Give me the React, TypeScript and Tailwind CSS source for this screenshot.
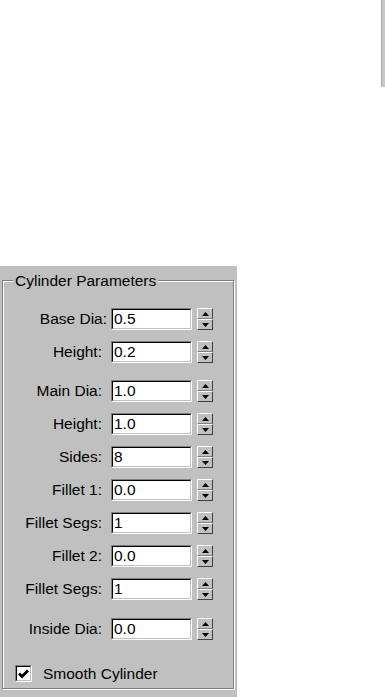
import React from "react";

type Row = { label: string; value: string; lpad?: string };

const group1: Row[] = [
  { label: "Base Dia:", value: "0.5", lpad: "w-[104px]" },
  { label: "Height:", value: "0.2" },
];
const group2: Row[] = [
  { label: "Main Dia:", value: "1.0" },
  { label: "Height:", value: "1.0" },
  { label: "Sides:", value: "8" },
  { label: "Fillet 1:", value: "0.0" },
  { label: "Fillet Segs:", value: "1" },
  { label: "Fillet 2:", value: "0.0" },
  { label: "Fillet Segs:", value: "1" },
];

function Spinner() {
  return (
    <div className="ml-[5px] flex h-[22px] w-[16px] flex-col">
      <div className="flex h-[11px] items-center justify-center border-t border-l border-b border-r border-t-white border-l-white border-b-[#808080] border-r-[#404040] bg-[#c0c0c0]">
        <svg width="7" height="4" viewBox="0 0 7 4">
          <polygon points="3.5,0 7,4 0,4" fill="#000" />
        </svg>
      </div>
      <div className="flex h-[11px] items-center justify-center border-t border-l border-b border-r border-t-white border-l-white border-b-[#404040] border-r-[#404040] bg-[#c0c0c0]">
        <svg width="7" height="4" viewBox="0 0 7 4">
          <polygon points="0,0 7,0 3.5,4" fill="#000" />
        </svg>
      </div>
    </div>
  );
}

function Field({ row }: { row: Row }) {
  return (
    <div className="flex h-[22px] items-center">
      <div className={`${row.lpad ?? "w-[99px]"} text-right leading-none`}>{row.label}</div>
      <div className={`${row.lpad ? "ml-[4px]" : "ml-[9px]"} h-[22px] w-[81px] border-t border-l border-b border-r border-t-[#808080] border-l-[#808080] border-b-white border-r-white`}>
        <div className="flex h-full w-full items-center border-t border-l border-b border-r border-t-[#000] border-l-[#000] border-b-[#c0c0c0] border-r-[#c0c0c0] bg-white pl-[1px] leading-none">
          {row.value}
        </div>
      </div>
      <Spinner />
    </div>
  );
}

export default function App() {
  return (
    <div className="h-[697px] w-[385px] overflow-hidden bg-white font-['Liberation_Sans',Arial,sans-serif] text-[15.5px] text-black">
      <div className="flex justify-end">
        <div className="h-[87px] w-[4px] border-l border-[#a8a8a8] bg-[#c8c8c8]" />
      </div>
      <div className="mt-[179px] h-[431px] w-[237px] bg-[#c0c0c0] px-[2px] pt-[14px]">
        <div className="relative h-[409px] w-[232px] border border-[#808080] shadow-[inset_1px_1px_0_#fff,1px_1px_0_#fff] pt-[27px]">
          <div className="absolute left-[10px] top-[-10px] bg-[#c0c0c0] px-[2px] leading-[19px]">
            Cylinder Parameters
          </div>
          <div className="flex flex-col gap-[11px]">
            {group1.map((r, i) => (
              <Field key={"a" + i} row={r} />
            ))}
          </div>
          <div className="mt-[17px] flex flex-col gap-[11px]">
            {group2.map((r, i) => (
              <Field key={"b" + i} row={r} />
            ))}
          </div>
          <div className="mt-[18px]">
            <Field row={{ label: "Inside Dia:", value: "0.0" }} />
          </div>
          <div className="mt-[25px] flex items-center">
            <div className="ml-[12px] h-[17px] w-[17px] border-t border-l border-b border-r border-t-[#808080] border-l-[#808080] border-b-white border-r-white">
              <div className="flex h-full w-full items-center justify-center border-t border-l border-b border-r border-t-[#000] border-l-[#000] border-b-[#c0c0c0] border-r-[#c0c0c0] bg-white">
                <svg width="11" height="10" viewBox="0 0 11 10">
                  <polyline points="1,4.5 4,7.5 10,1.5" fill="none" stroke="#000" strokeWidth="2.8" />
                </svg>
              </div>
            </div>
            <div className="ml-[11px] leading-none">Smooth Cylinder</div>
          </div>
        </div>
      </div>
    </div>
  );
}
